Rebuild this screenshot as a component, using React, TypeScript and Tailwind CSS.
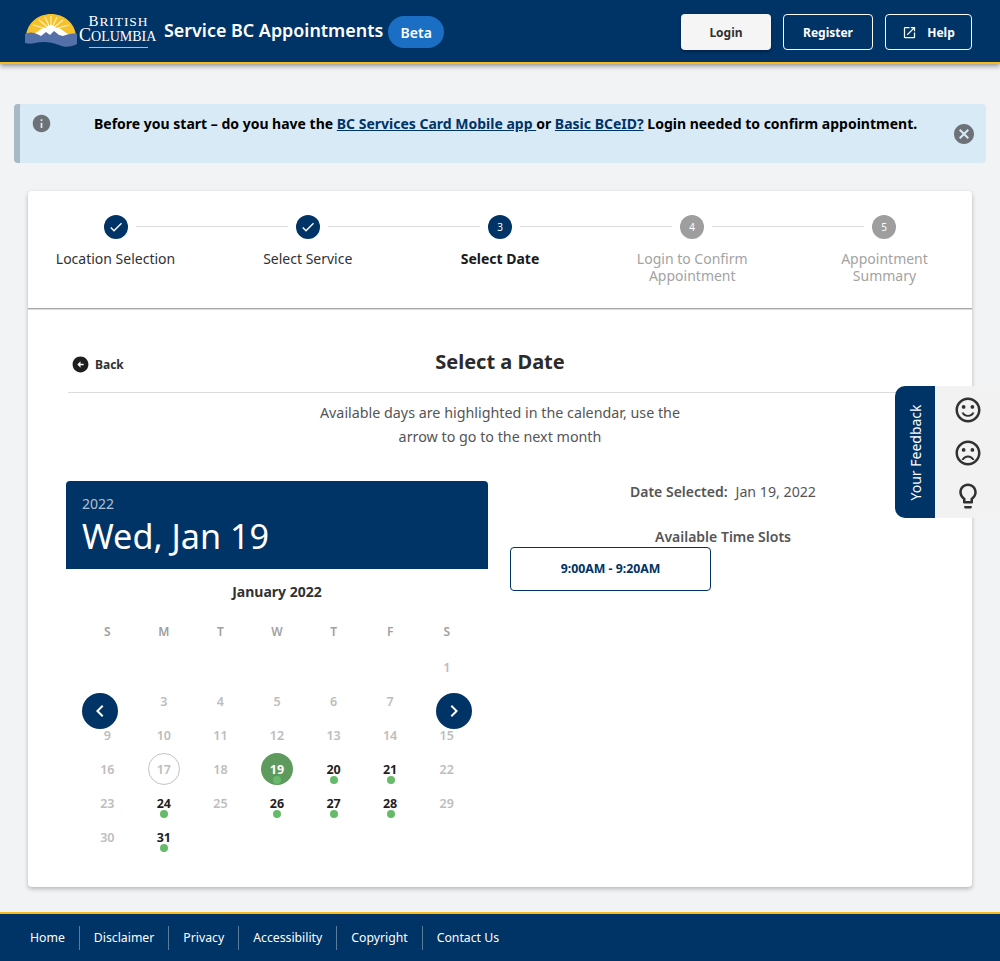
import {
  MdArrowCircleLeft,
  MdCancel,
  MdCheck,
  MdChevronLeft,
  MdChevronRight,
  MdInfo,
  MdOpenInNew,
  MdOutlineLightbulb,
  MdOutlineSentimentDissatisfied,
  MdOutlineSentimentSatisfiedAlt,
} from "react-icons/md";

const steps = [
  { label: "Location Selection", state: "done" },
  { label: "Select Service", state: "done" },
  { label: "Select Date", state: "current", n: 3 },
  { label: "Login to Confirm Appointment", state: "todo", n: 4 },
  { label: "Appointment Summary", state: "todo", n: 5 },
];

const weeks: (number | null)[][] = [
  [null, null, null, null, null, null, 1],
  [2, 3, 4, 5, 6, 7, 8],
  [9, 10, 11, 12, 13, 14, 15],
  [16, 17, 18, 19, 20, 21, 22],
  [23, 24, 25, 26, 27, 28, 29],
  [30, 31, null, null, null, null, null],
];

const available = [19, 20, 21, 24, 26, 27, 28, 31];

function Logo() {
  return (
    <div className="flex w-[131px] items-center">
      <svg width="52" height="34" viewBox="0 0 52 34" className="shrink-0">
        <path d="M1 22 C2 9 13 0 26 0 C39 0 50 9 51 22 Z" fill="#f5c22e" />
        <g stroke="#fdf0b8" strokeWidth="1.2">
          <path d="M26 16 L26 2" />
          <path d="M26 16 L20 3" />
          <path d="M26 16 L32 3" />
          <path d="M26 16 L14 6" />
          <path d="M26 16 L38 6" />
          <path d="M26 16 L8 11" />
          <path d="M26 16 L44 11" />
        </g>
        <path d="M9 20 C13 18 17 13 21 14 C23 10 29 10 31 14 C35 13 39 18 43 20 L43 24 L9 24 Z" fill="#ffffff" />
        <path
          d="M0 20 C4 18 8 18 12 20 L16 22 L21 18 L25 21 L29 17 L34 21 L38 22 C43 20 48 19 52 20 L52 30 C46 33 40 34 34 31 C26 28 18 27 10 29 C6 30 3 30 0 29 Z"
          fill="#5470a8"
        />
      </svg>
      <div className="ml-[2px] flex flex-col items-end font-['Liberation_Serif',serif] text-white">
        <span className="mr-[8px] text-[15px] leading-[12px] tracking-[0.9px]">
          B<span className="text-[13.5px]">RITISH</span>
        </span>
        <span className="text-[18px] leading-[15px]">
          C<span className="text-[14px]">OLUMBIA</span>
        </span>
        <span className="mr-[8px] mt-[3px] h-px w-[59px] bg-[#fcba19]" />
      </div>
    </div>
  );
}

function Header() {
  return (
    <header className="relative z-10 flex h-[64px] items-center justify-between border-b-2 border-[#fcba19] bg-[#003366] pl-[25px] pr-[28px] pt-[2px] shadow-[0_2px_5px_rgba(0,0,0,0.4)]">
      <div className="flex items-center">
        <div className="-mt-[2px]">
          <Logo />
        </div>
        <span className="-mt-[3px] ml-[8px] text-[17.9px] font-semibold text-white">Service BC Appointments</span>
        <span className="ml-[5px] flex h-[32px] w-[56px] items-center justify-center rounded-full bg-[#1a6fc4] text-[14px] font-semibold text-white">
          Beta
        </span>
      </div>
      <div className="flex items-center gap-[12px] text-[12px] font-bold">
        <button className="h-[36px] w-[90px] rounded-[4px] bg-[#f5f5f5] pt-[1px] text-[#313132] shadow-[0_2px_3px_rgba(0,0,0,0.3)]">
          Login
        </button>
        <button className="h-[36px] w-[90px] rounded-[4px] border border-white pt-[1px] text-white">Register</button>
        <button className="flex h-[36px] w-[87px] items-center justify-center gap-[10px] rounded-[4px] border border-white pt-[1px] text-white">
          <MdOpenInNew className="text-[15px]" />
          Help
        </button>
      </div>
    </header>
  );
}

function Banner() {
  return (
    <div className="mx-[14px] mt-[40px] flex h-[59px] rounded-[4px] border-l-[6px] border-[#a9b8c6] bg-[#d9eaf7]">
      <MdInfo className="ml-[11px] mt-[9px] shrink-0 text-[21px] text-[#6d7178]" />
      <p className="ml-[42px] mt-[10px] whitespace-nowrap text-[14px] font-bold leading-[20px] text-black">
        Before you start – do you have the{" "}
        <a className="text-[#003366] underline">BC Services Card Mobile app </a>or{" "}
        <a className="text-[#003366] underline">Basic BCeID?</a> Login needed to confirm appointment.
      </p>
      <MdCancel className="ml-auto mr-[10px] mt-[18px] shrink-0 text-[24px] text-[#6d7178]" />
    </div>
  );
}

function Stepper() {
  return (
    <div className="h-[118px] rounded-t-[4px] border-b border-[#a8a8a8] pt-[24px] shadow-[0_1px_1px_rgba(0,0,0,0.15)]">
      <div className="flex items-center px-[76px]">
        {steps.map((s, i) => (
          <div key={s.label} className={i < 4 ? "flex flex-1 items-center" : "flex items-center"}>
            <span
              className={
                s.state === "todo"
                  ? "flex h-[24px] w-[24px] items-center justify-center rounded-full bg-[#9e9e9e] text-[10px] text-white"
                  : "flex h-[24px] w-[24px] items-center justify-center rounded-full bg-[#003366] text-[10px] text-white"
              }
            >
              {s.state === "done" ? <MdCheck className="text-[16px]" /> : s.n}
            </span>
            {i < 4 && <span className="mx-[8px] mb-[2px] h-px flex-1 bg-[#dcdcdc]" />}
          </div>
        ))}
      </div>
      <div className="mt-[11px] flex justify-between">
        {steps.map((s) => (
          <div key={s.label} className="flex w-[175px] justify-center">
            <span
              className={
                s.state === "current"
                  ? "max-w-[130px] text-center text-[14px] font-bold leading-[17px] text-[#1a1a1a]"
                  : s.state === "done"
                    ? "max-w-[130px] text-center text-[14px] leading-[17px] text-[#313132]"
                    : "max-w-[130px] text-center text-[14px] leading-[17px] text-[#a3a3a3]"
              }
            >
              {s.label}
            </span>
          </div>
        ))}
      </div>
    </div>
  );
}

function Calendar() {
  return (
    <div className="w-[422px]">
      <div className="h-[88px] rounded-t-[4px] bg-[#003366] px-[16px] pt-[13px] text-white">
        <div className="text-[14px] leading-[20px] text-white/70">2022</div>
        <div className="text-[34.2px] leading-[44px]">Wed, Jan 19</div>
      </div>
      <div className="relative">
        <div className="pt-[12px] text-center text-[14px] font-bold leading-[22px] text-[#313132]">January 2022</div>
        <div className="mt-[17px] grid grid-cols-7 px-[13px] text-center text-[12px] font-semibold leading-[24px] text-[#a0a0a0]">
          {["S", "M", "T", "W", "T", "F", "S"].map((d, i) => (
            <span key={i}>{d}</span>
          ))}
        </div>
        <div className="mt-[6px] px-[13px]">
          {weeks.map((week, w) => (
            <div key={w} className="grid h-[34px] grid-cols-7">
              {week.map((d, i) => (
                <div key={i} className="flex items-center justify-center">
                  {d !== null && <Day d={d} />}
                </div>
              ))}
            </div>
          ))}
        </div>
        <button className="absolute left-[16px] top-[124px] flex h-[36px] w-[36px] items-center justify-center rounded-full bg-[#003366] text-white">
          <MdChevronLeft className="text-[24px]" />
        </button>
        <button className="absolute right-[16px] top-[124px] flex h-[36px] w-[36px] items-center justify-center rounded-full bg-[#003366] text-white">
          <MdChevronRight className="text-[24px]" />
        </button>
      </div>
    </div>
  );
}

function Day({ d }: { d: number }) {
  const open = available.includes(d);
  const selected = d === 19;
  const today = d === 17;
  return (
    <span
      className={
        selected
          ? "relative flex h-[32px] w-[32px] items-center justify-center rounded-full bg-[#5e9a5e] pt-[2px] text-[12.5px] font-bold text-white"
          : today
            ? "relative flex h-[32px] w-[32px] items-center justify-center rounded-full border border-[#c4c4c4] pt-[2px] text-[12.5px] font-semibold text-[#bdbdbd]"
            : open
              ? "relative flex h-[32px] w-[32px] items-center justify-center pt-[2px] text-[12.5px] font-bold text-[#1f1f1f]"
              : "relative flex h-[32px] w-[32px] items-center justify-center pt-[2px] text-[12.5px] font-semibold text-[#bdbdbd]"
      }
    >
      {d}
      {open && <span className="absolute left-[12.5px] top-[23px] h-[8px] w-[8px] rounded-full bg-[#66bb6a]" />}
    </span>
  );
}

function Feedback() {
  return (
    <div className="absolute left-[895px] top-[386px] z-20 flex h-[132px] w-[105px]">
      <div className="flex w-[40px] items-center justify-center rounded-l-[10px] bg-[#003366]">
        <span className="-rotate-90 whitespace-nowrap text-[14px] text-white">Your Feedback</span>
      </div>
      <div className="flex flex-1 flex-col items-center gap-[13px] bg-[#f2f2f2] pt-[9px] text-[#313132]">
        <MdOutlineSentimentSatisfiedAlt className="text-[30px]" />
        <MdOutlineSentimentDissatisfied className="text-[30px]" />
        <MdOutlineLightbulb className="text-[30px]" />
      </div>
    </div>
  );
}

function Footer() {
  const links = ["Home", "Disclaimer", "Privacy", "Accessibility", "Copyright", "Contact Us"];
  return (
    <footer className="flex h-[49px] items-center border-t-2 border-[#fcba19] bg-[#003366] pl-[16px] pt-[1px]">
      {links.map((l, i) => (
        <a
          key={l}
          className={
            i === 0
              ? "flex h-[24px] items-center px-[14px] text-[12.25px] text-white"
              : "flex h-[24px] items-center border-l border-[#5c7a99] px-[14px] text-[12.25px] text-white"
          }
        >
          {l}
        </a>
      ))}
    </footer>
  );
}

export default function App() {
  return (
    <div className="relative min-h-[961px] bg-[#f2f3f5] font-['Noto_Sans',sans-serif]">
      <Header />
      <Banner />
      <main className="mx-[28px] mb-[25px] mt-[28px] h-[696px] rounded-[4px] bg-white shadow-[0_2px_4px_rgba(0,0,0,0.25)]">
        <Stepper />
        <section className="px-[38px]">
          <div className="relative mx-[2px] mt-[35px] flex h-[49px] items-center justify-center border-b border-[#dcdcdc]">
            <button className="absolute left-[3px] top-[11px] flex items-center gap-[5px] text-[12px] font-bold text-[#313132]">
              <MdArrowCircleLeft className="text-[19px] text-[#1f1f1f]" />
              Back
            </button>
            <h1 className="pb-[13px] text-[20px] font-bold text-[#2b2b2b]">Select a Date</h1>
          </div>
          <p className="mx-auto mt-[8px] w-[380px] text-center text-[14.3px] leading-[24px] text-[#555555]">
            Available days are highlighted in the calendar, use the arrow to go to the next month
          </p>
          <div className="mt-[32px] flex">
            <Calendar />
            <div className="ml-[22px] flex-1">
              <div className="mt-[1px] pl-[2px] text-center text-[14px] leading-[20px] text-[#555555]">
                <span className="font-semibold">Date Selected:</span>
                <span className="ml-[8px] text-[14.2px]">Jan 19, 2022</span>
              </div>
              <div className="mt-[25px] pl-[2px] text-center text-[14px] font-semibold leading-[20px] text-[#555555]">
                Available Time Slots
              </div>
              <button className="h-[44px] w-[201px] rounded-[4px] border border-[#003366] text-[12.3px] font-bold text-[#003366]">
                9:00AM - 9:20AM
              </button>
            </div>
          </div>
        </section>
      </main>
      <Footer />
      <Feedback />
    </div>
  );
}
